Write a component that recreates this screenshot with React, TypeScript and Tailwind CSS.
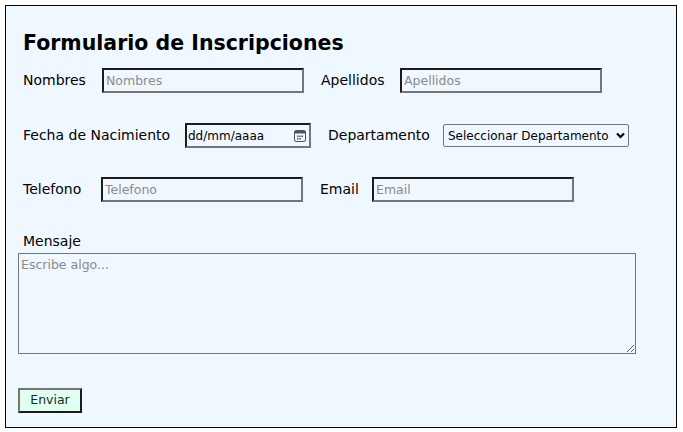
import React from "react";

const font = "font-['Comic_Sans_MS','DejaVu_Sans',sans-serif]";

function TextField({ placeholder, w = "w-[202px]" }: { placeholder: string; w?: string }) {
  return (
    <input
      type="text"
      placeholder={placeholder}
      className={`${w} h-[25px] border-2 border-t-[#1c1c1c] border-l-[#1c1c1c] border-b-[#767676] border-r-[#767676] bg-transparent px-[2px] text-[12.5px] text-black placeholder:text-[#8a8a8a] outline-none ${font}`}
    />
  );
}

export default function App() {
  return (
    <div className={`min-h-screen bg-white p-[5px] ${font}`}>
      <div className="w-[672px] h-[423px] border border-black bg-[#f0f8ff] pl-3 pt-[21px] text-black">
        {/* Titulo */}
        <h2 className="ml-[5px] h-[32px] flex items-center text-[20.5px] font-bold leading-none">
          Formulario de Inscripciones
        </h2>

        {/* Fila 1 */}
        <div className="mt-[9px] h-[25px] flex items-center gap-4 ml-[5px] text-[14px]">
          <label className="w-[63px] whitespace-nowrap">Nombres</label>
          <TextField placeholder="Nombres" />
          <label className="ml-[1px] w-[63px] whitespace-nowrap">Apellidos</label>
          <TextField placeholder="Apellidos" />
        </div>

        {/* Fila 2 */}
        <div className="mt-[30px] h-[25px] flex items-center gap-4 ml-[5px] text-[14px]">
          <label className="w-[146px] whitespace-nowrap">Fecha de Nacimiento</label>
          <div className="w-[126px] h-[25px] flex items-center justify-between border-2 border-t-[#1c1c1c] border-l-[#1c1c1c] border-b-[#767676] border-r-[#767676] pl-[1px] pr-[3px] text-[12px]">
            <span>dd/mm/aaaa</span>
            <svg width="12" height="12" viewBox="0 0 12 12" fill="none">
              <rect x="0.5" y="0.5" width="11" height="11" rx="1.5" stroke="#555" />
              <rect x="1" y="1" width="10" height="2.5" fill="#555" />
              <rect x="3" y="5.5" width="1.5" height="1.5" fill="#555" />
              <rect x="5.25" y="5.5" width="1.5" height="1.5" fill="#555" />
              <rect x="7.5" y="5.5" width="1.5" height="1.5" fill="#555" />
              <rect x="3" y="8" width="1.5" height="1.5" fill="#555" />
              <rect x="5.25" y="8" width="1.5" height="1.5" fill="#555" />
            </svg>
          </div>
          <label className="ml-[1px] w-[99px] whitespace-nowrap">Departamento</label>
          <div className="w-[186px] h-[23px] flex items-center justify-between border border-[#767676] rounded-[2px] pl-[4px] pr-[3px] text-[12px]">
            <span className="whitespace-nowrap">Seleccionar Departamento</span>
            <svg width="9" height="7" viewBox="0 0 9 7" className="shrink-0">
              <path d="M1 1.5 L4.5 5 L8 1.5" stroke="#000" strokeWidth="2.2" fill="none" />
            </svg>
          </div>
        </div>

        {/* Fila 3 */}
        <div className="mt-[29px] h-[25px] flex items-center gap-4 ml-[5px] text-[14px]">
          <label className="w-[62px] whitespace-nowrap">Telefono</label>
          <TextField placeholder="Telefono" />
          <label className="ml-[1px] w-[36px] whitespace-nowrap">Email</label>
          <TextField placeholder="Email" />
        </div>

        {/* Mensaje */}
        <div className="mt-[28px] h-[23px] ml-[5px] text-[14px] flex items-center">
          <label>Mensaje</label>
        </div>
        <textarea
          placeholder="Escribe algo..."
          className={`block w-[618px] h-[101px] border border-[#767676] bg-transparent px-[2px] py-[2px] text-[12.5px] placeholder:text-[#8a8a8a] outline-none ${font}`}
        />

        <button className="mt-[34px] w-[64px] h-[25px] border-2 border-t-[#767676] border-l-[#767676] border-b-[#1c1c1c] border-r-[#1c1c1c] bg-[#e0fff0] text-[12.5px] text-[#1c2a1c]">
          Enviar
        </button>
      </div>
    </div>
  );
}
